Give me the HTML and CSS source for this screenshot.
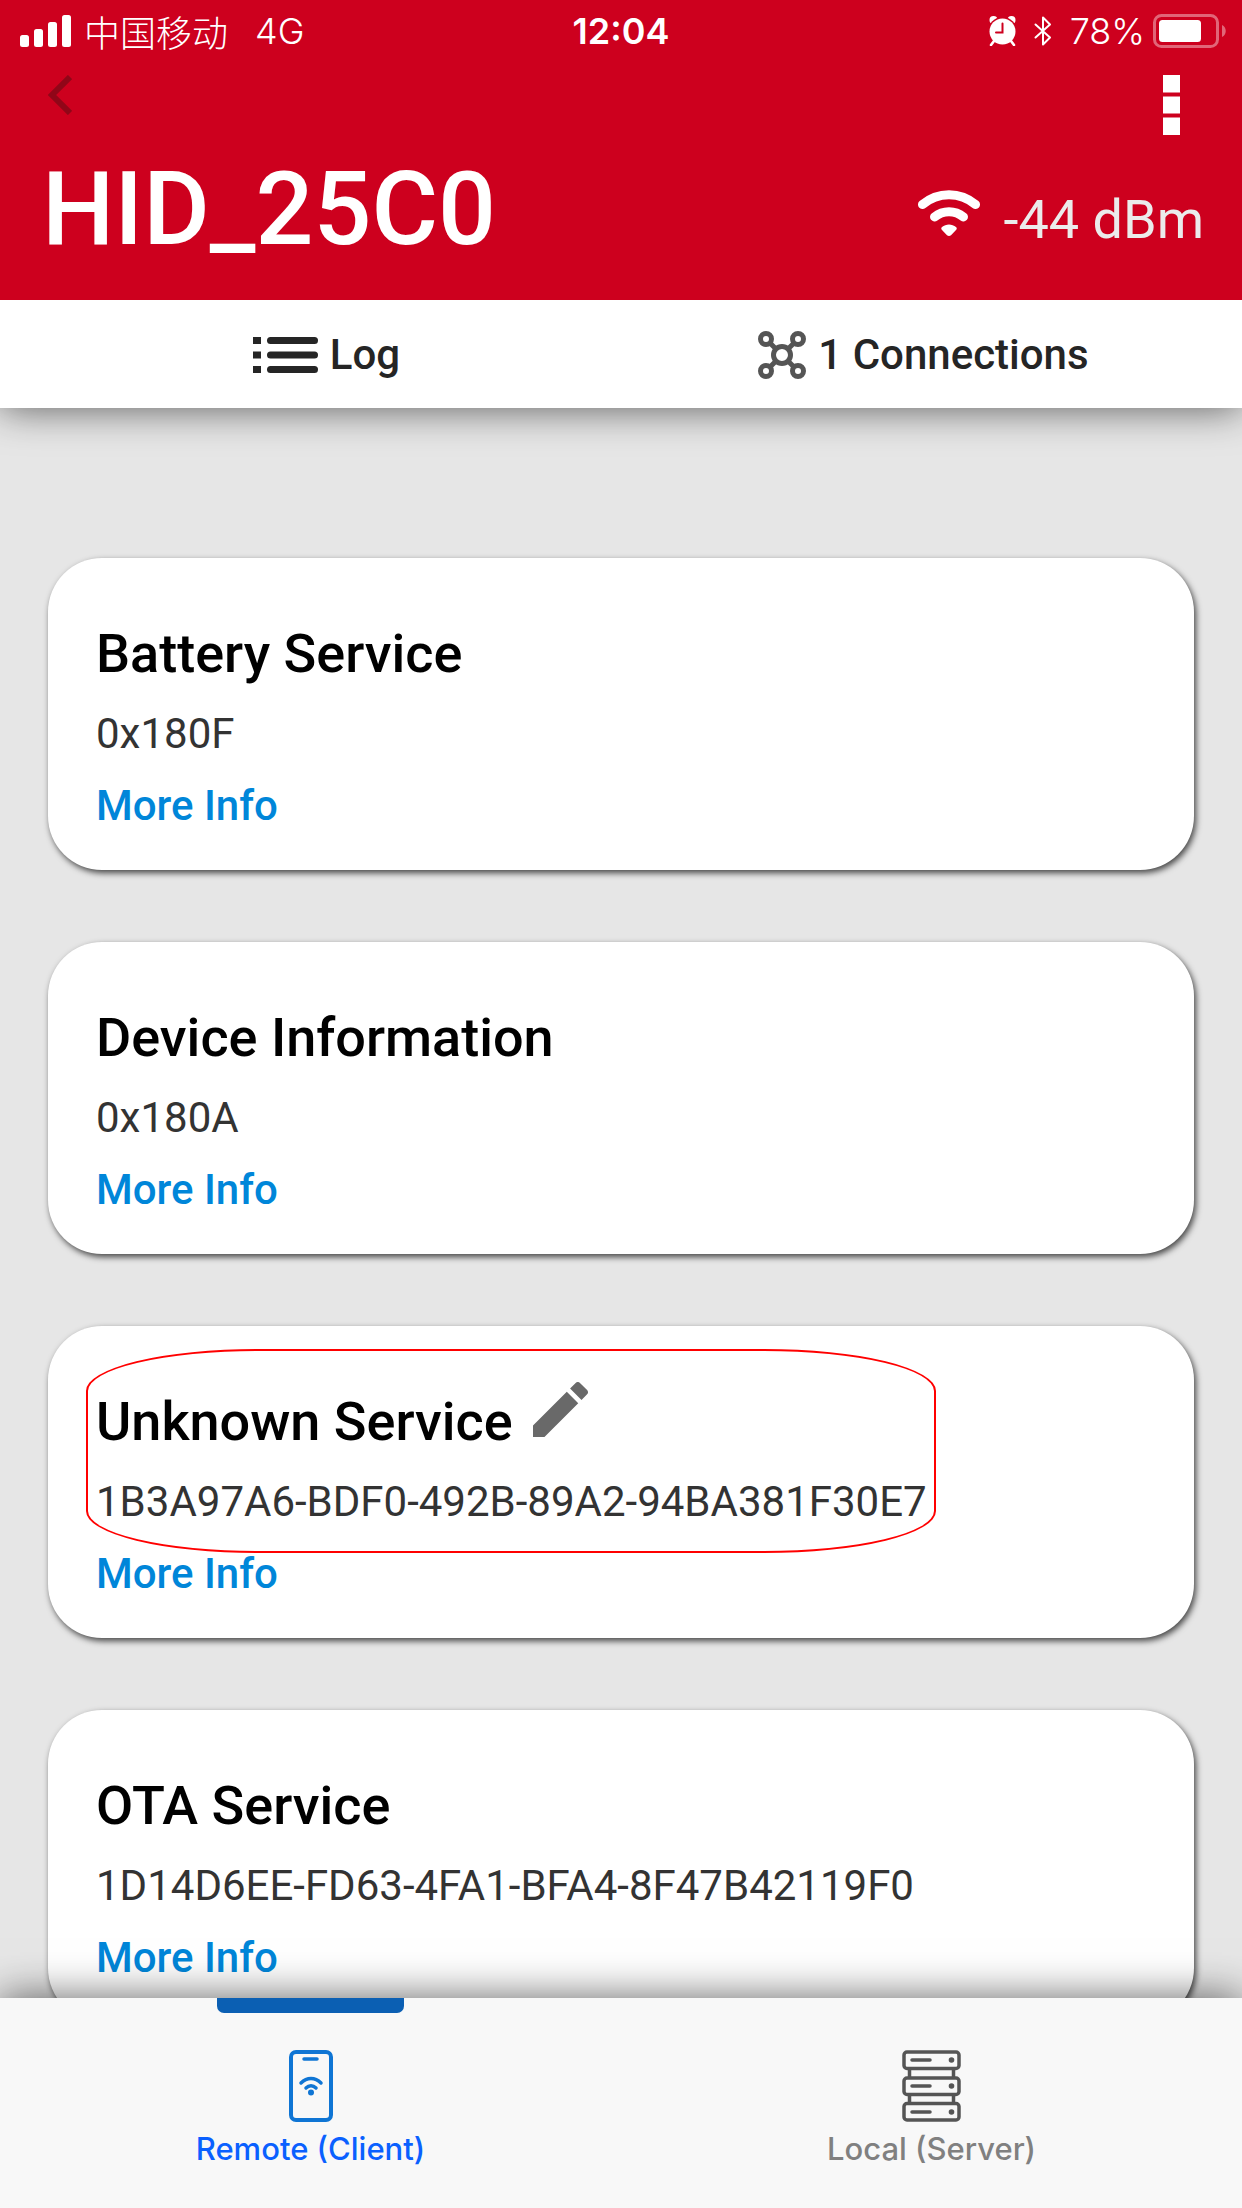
FILE: index.html
```html
<!DOCTYPE html>
<html lang="en">
<head>
  <meta charset="utf-8">
  <meta name="viewport" content="width=device-width, initial-scale=1">
  <title>HID_25C0</title>
  <link rel="stylesheet" href="styles.css">
</head>
<body>
  <div class="app">
    <header class="header">
      <div class="status">
        <div class="status-left">
          <svg class="signal-bars" viewBox="0 0 51 32" fill="#fff" aria-hidden="true">
            <rect x="0" y="20" width="9" height="12" rx="2.5"/>
            <rect x="14" y="14" width="9" height="18" rx="2.5"/>
            <rect x="28" y="7" width="9" height="25" rx="2.5"/>
            <rect x="42" y="0" width="9" height="32" rx="2.5"/>
          </svg>
          <span class="carrier" lang="zh">中国移动</span>
          <span class="network">4G</span>
        </div>
        <time class="clock">12:04</time>
        <div class="status-right">
          <svg class="alarm" viewBox="0 0 27 30" aria-hidden="true">
            <g fill="#fff">
              <circle cx="4.5" cy="4" r="4"/>
              <circle cx="22.5" cy="4" r="4"/>
            </g>
            <circle cx="13.5" cy="15.5" r="14.5" fill="#cd001e"/>
            <path d="M5 25l-3 4M22 25l3 4" stroke="#fff" stroke-width="2.6" stroke-linecap="round"/>
            <circle cx="13.5" cy="15.5" r="13" fill="#fff"/>
            <path d="M13.5 7.500v9H7" fill="none" stroke="#cd001e" stroke-width="2" stroke-linecap="round"/>
          </svg>
          <svg class="bluetooth" viewBox="0 0 18 30" fill="none" stroke="#fff" stroke-width="2" stroke-linejoin="round" stroke-linecap="round" aria-hidden="true">
            <path d="M1.500 8.500L16 21.500 9 28.500V1.500L16 8.500 1.500 21.500"/>
          </svg>
          <span class="percent">78%</span>
          <svg class="battery" viewBox="0 0 73 34" aria-hidden="true">
            <rect x="1.500" y="1.500" width="63" height="31" rx="7" fill="none" stroke="#fff" stroke-opacity=".4" stroke-width="3"/>
            <rect x="6" y="6" width="42" height="22" rx="3.500" fill="#fff"/>
            <path d="M69 11c5 2 5 10 0 12z" fill="#fff" fill-opacity=".4"/>
          </svg>
        </div>
      </div>
      <div class="toolbar">
        <button class="icon-button" type="button" aria-label="Back">
          <svg class="back" viewBox="0 0 24 40" aria-hidden="true"><path d="M22 2L4 20l18 18" fill="none" stroke="#900618" stroke-width="6"/></svg>
        </button>
        <button class="icon-button" type="button" aria-label="Menu">
          <svg class="dots" viewBox="0 0 17 60" fill="#fff" aria-hidden="true">
            <path d="M0 0h17v17.500H0zM0 21.500h17V38.500H0zM0 42.500h17V60H0z"/>
          </svg>
        </button>
      </div>
      <div class="device">
        <h1 class="device-name">HID_25C0</h1>
        <div class="rssi">
          <svg class="wifi" viewBox="0 0 62 50" aria-hidden="true">
            <g fill="none" stroke="#fff" stroke-width="9" stroke-linecap="round">
              <path d="M4.500 16.500C20 3.500 42 3.500 57.500 16.500"/>
              <path d="M16.500 29C25 22 37 22 45.500 29"/>
            </g>
            <path d="M24 42c-1-1-1-2 0-3 4-3.500 10-3.500 14 0 1 1 1 2 0 3l-5 5.200c-1.200 1-2.800 1-4 0z" fill="#fff"/>
          </svg>
          <span>-44 dBm</span>
        </div>
      </div>
    </header>

    <nav class="actions" aria-label="Device">
      <button class="action" type="button">
        <svg class="list" viewBox="0 0 65 36" fill="#252525" aria-hidden="true">
          <path d="M0 0h8v7H0zM0 14.500h8v7H0zM0 29h8v7H0z"/>
          <rect x="14" y="0" width="51" height="7" rx="3.500"/>
          <rect x="14" y="14.500" width="51" height="7" rx="3.500"/>
          <rect x="14" y="29" width="51" height="7" rx="3.500"/>
        </svg>
        Log
      </button>
      <button class="action" type="button">
        <svg class="nodes" viewBox="0 0 48 48" fill="none" stroke="#555" stroke-width="5" aria-hidden="true">
          <circle cx="8" cy="8" r="5.500"/><circle cx="40" cy="8" r="5.500"/>
          <circle cx="8" cy="40" r="5.500"/><circle cx="40" cy="40" r="5.500"/>
          <circle cx="24" cy="24" r="8.500"/>
          <path d="M12 12l6 6M36 12l-6 6M12 36l6-6M36 36l-6-6"/>
        </svg>
        1 Connections
      </button>
    </nav>

    <main class="services">
      <section class="card">
        <div class="card-id">
          <h2 class="card-title">Battery Service</h2>
          <p class="uuid">0x180F</p>
        </div>
        <a class="more" href="#battery">More Info</a>
      </section>
      <section class="card">
        <div class="card-id">
          <h2 class="card-title">Device Information</h2>
          <p class="uuid">0x180A</p>
        </div>
        <a class="more" href="#device">More Info</a>
      </section>
      <section class="card">
        <div class="card-id marked">
          <div class="card-heading">
            <h2 class="card-title">Unknown Service</h2>
            <button class="icon-button edit" type="button" aria-label="Rename service">
              <svg class="pencil" viewBox="3 3 18 18" fill="#696969" aria-hidden="true">
                <path d="M3 17.250V21h3.750L17.810 9.940l-3.750-3.750L3 17.250zM20.710 7.040c.39-.39.39-1.020 0-1.410l-2.340-2.340c-.39-.39-1.020-.39-1.410 0l-1.830 1.830 3.750 3.750 1.830-1.830z"/>
              </svg>
            </button>
          </div>
          <p class="uuid">1B3A97A6-BDF0-492B-89A2-94BA381F30E7</p>
        </div>
        <a class="more" href="#unknown">More Info</a>
      </section>
      <section class="card">
        <div class="card-id">
          <h2 class="card-title">OTA Service</h2>
          <p class="uuid">1D14D6EE-FD63-4FA1-BFA4-8F47B42119F0</p>
        </div>
        <a class="more" href="#ota">More Info</a>
      </section>
    </main>

    <nav class="tabs" aria-label="Mode">
      <a class="tab tab-active" href="#remote" aria-current="page">
        <svg class="tab-icon" viewBox="0 0 44 72" fill="none" stroke="#0f75d4" stroke-width="4" stroke-linecap="round" aria-hidden="true">
          <rect x="2" y="2" width="40" height="68" rx="5"/>
          <path d="M15 9h13M12 33C18 27 26 27 32 33M17 38C20 35 24 35 27 38" stroke-width="3.500"/>
          <circle cx="22" cy="42.500" r="3" fill="#0f75d4" stroke="none"/>
        </svg>
        Remote (Client)
      </a>
      <a class="tab" href="#local">
        <svg class="tab-icon" viewBox="0 0 59 72" fill="none" stroke="#555" stroke-width="3.500" stroke-linecap="round" aria-hidden="true">
          <rect x="2" y="2" width="55" height="16.500" rx="3"/>
          <rect x="2" y="28" width="55" height="16.500" rx="3"/>
          <rect x="2" y="53.500" width="55" height="16.500" rx="3"/>
          <path d="M7.500 19v8M51.500 19v8M7.500 45v8M51.500 45v8M10 10h18M10 36h18M10 62h18"/>
          <g fill="#555" stroke="none"><circle cx="49.500" cy="10" r="2.800"/><circle cx="49.500" cy="36" r="2.800"/><circle cx="49.500" cy="62" r="2.800"/></g>
        </svg>
        Local (Server)
      </a>
    </nav>
  </div>
</body>
</html>
```
FILE: styles.css
```css
* {
  box-sizing: border-box;
  margin: 0;
  padding: 0;
}

body {
  font-family: Roboto, "Liberation Sans", sans-serif;
  background: #e6e6e6;
}

button {
  border: 0;
  background: none;
  font: inherit;
  color: inherit;
  cursor: pointer;
}

a {
  text-decoration: none;
}

svg {
  display: block;
  flex: none;
}

.app {
  display: flex;
  flex-direction: column;
  height: 100vh;
}

/* Header */

.header {
  position: relative;
  z-index: 2;
  background: #cd001e;
  color: #fff;
  padding-bottom: 31px;
}

.status {
  display: grid;
  grid-template-columns: 1fr auto 1fr;
  align-items: center;
  height: 60px;
  padding: 0 16px;
  font-family: Inter, "Noto Sans CJK SC", sans-serif;
  font-size: 36px;
  line-height: 62px;
}

.status-left,
.status-right {
  display: flex;
  align-items: center;
}

.status-left {
  padding-left: 4px;
}

.status-right {
  justify-content: flex-end;
}

.signal-bars {
  width: 51px;
  height: 32px;
  margin-right: 13px;
}

.carrier {
  font-family: "Noto Sans CJK SC", sans-serif;
  font-weight: 300;
  line-height: 60px;
  margin-right: 27px;
}

.network,
.percent {
  font-weight: 300;
}

.clock {
  font-weight: 600;
}

.alarm {
  width: 27px;
  height: 30px;
  margin-right: 18px;
}

.bluetooth {
  width: 18px;
  height: 30px;
  margin-right: 18px;
}

.battery {
  width: 73px;
  height: 34px;
  margin-left: 8px;
}

.toolbar {
  display: flex;
  justify-content: space-between;
  align-items: flex-start;
  height: 89px;
  padding: 15px 62px 0 48px;
}

.back {
  width: 24px;
  height: 40px;
}

.dots {
  width: 17px;
  height: 60px;
}

.device {
  display: flex;
  justify-content: space-between;
  align-items: flex-end;
  padding: 0 38px 0 42px;
}

.device-name {
  font-size: 102px;
  font-weight: 500;
  line-height: 120px;
}

.rssi {
  display: flex;
  align-items: flex-start;
  gap: 24px;
  padding-bottom: 17px;
  font-size: 54px;
  line-height: 64px;
  color: #ebebeb;
}

.wifi {
  width: 62px;
  height: 50px;
}

/* Log / connections bar */

.actions {
  position: relative;
  z-index: 1;
  display: grid;
  grid-template-columns: 1fr 1fr;
  padding: 0 20px 0 28px;
  background: #fff;
  box-shadow: 0 0 40px rgba(0, 0, 0, 0.62);
}

.action {
  display: flex;
  align-items: center;
  justify-content: center;
  gap: 12px;
  height: 108px;
  padding-top: 1px;
  color: #252525;
  font-size: 42px;
  font-weight: 500;
  line-height: 50px;
}

.list {
  width: 65px;
  height: 36px;
}

.nodes {
  width: 48px;
  height: 48px;
}

/* Service cards */

.services {
  flex: 1;
  min-height: 0;
  overflow-y: auto;
  scrollbar-width: none;
  display: flex;
  flex-direction: column;
  gap: 72px;
  padding: 150px 48px 72px;
}

.card {
  flex: none;
  display: flex;
  flex-direction: column;
  align-items: flex-start;
  gap: 22px;
  padding: 64px 48px 39px;
  border-radius: 54px;
  background: #fff;
  box-shadow: 2px 3px 6px rgba(0, 0, 0, 0.7);
}

.card-id {
  display: flex;
  flex-direction: column;
  gap: 23px;
}

.card-heading {
  display: flex;
  align-items: flex-start;
  gap: 20px;
}

.card-title {
  font-size: 54px;
  font-weight: 500;
  line-height: 64px;
  color: #000;
}

.uuid {
  font-size: 42px;
  line-height: 50px;
  color: #333;
}

.more {
  font-size: 42px;
  font-weight: 500;
  line-height: 50px;
  color: #0086d9;
}

.edit {
  margin-top: -8px;
}

.pencil {
  width: 55px;
  height: 55px;
}

/* Hand-marked highlight around a service's name and id */
.marked {
  position: relative;
}

.marked::after {
  content: "";
  position: absolute;
  inset: -41px -9px -26px -10px;
  border: 2px solid #f00;
  border-radius: 172px / 42px;
  pointer-events: none;
}

/* Bottom tabs */

.tabs {
  position: relative;
  z-index: 1;
  display: grid;
  grid-template-columns: 1fr 1fr;
  background: #f8f8f8;
  box-shadow: 0 0 40px rgba(0, 0, 0, 0.62);
}

.tab {
  position: relative;
  display: flex;
  flex-direction: column;
  align-items: center;
  gap: 9px;
  padding: 52px 0 41px;
  font-family: Inter, sans-serif;
  font-size: 31px;
  font-weight: 500;
  line-height: 36px;
  color: #808080;
}

.tab-active {
  color: #0a60ff;
}

.tab-active::before {
  content: "";
  position: absolute;
  top: 0;
  left: 35%;
  width: 30%;
  height: 15px;
  border-radius: 0 0 7px 7px;
  background: #0b5fb3;
}

.tab-icon {
  height: 72px;
}
```
